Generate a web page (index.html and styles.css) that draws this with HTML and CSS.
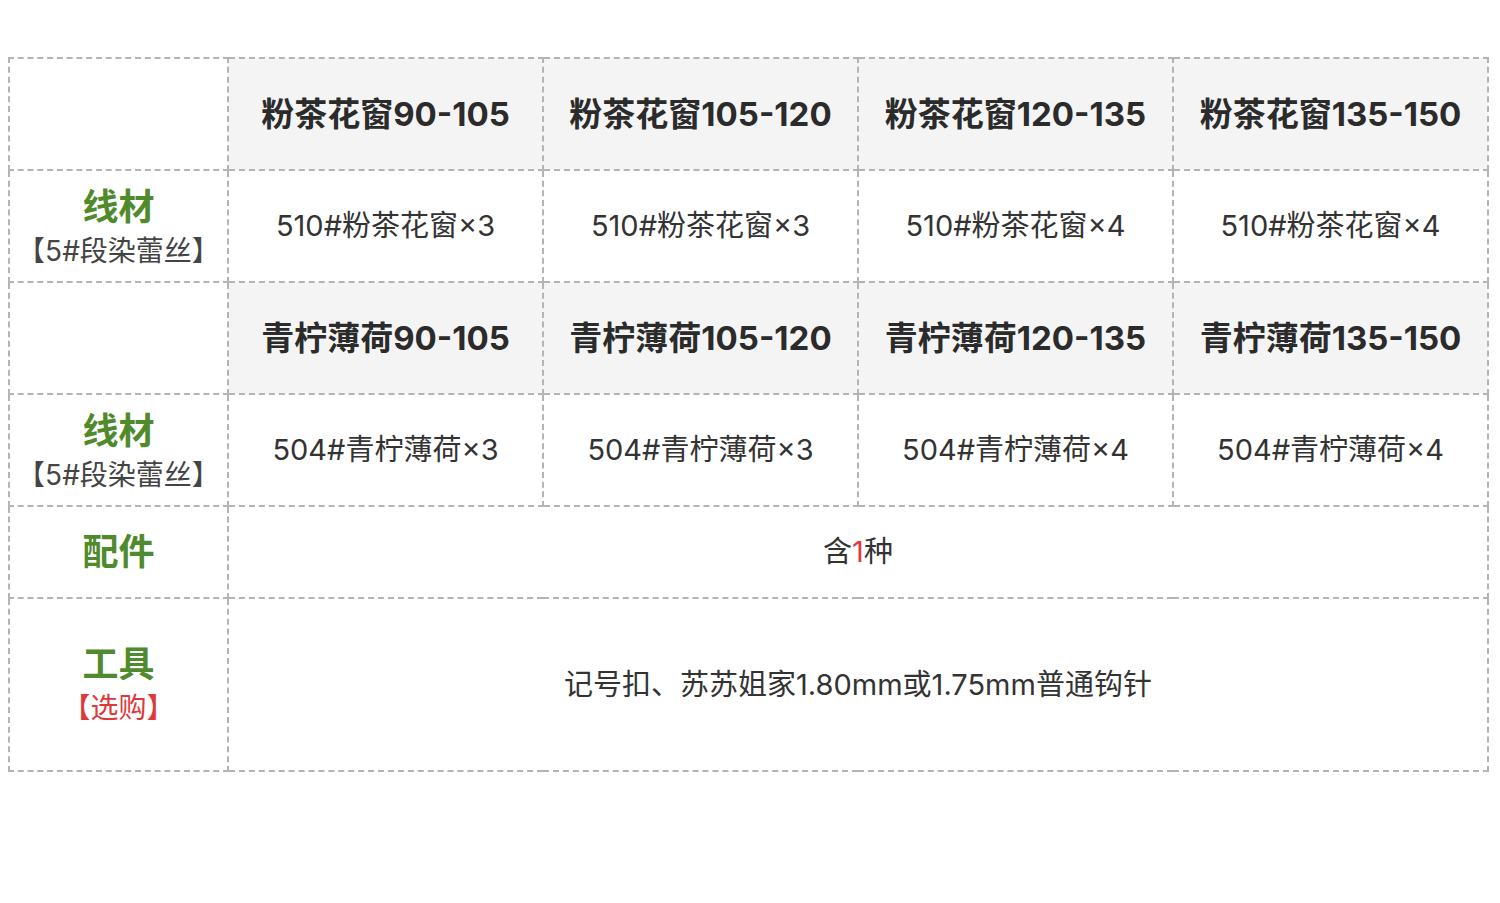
FILE: index.html
```html
<!DOCTYPE html>
<html lang="zh">
<head>
<meta charset="utf-8">
<link rel="stylesheet" href="styles.css">
</head>
<body>
<table class="spec">
  <colgroup>
    <col class="c-label">
    <col class="c-size"><col class="c-size"><col class="c-size"><col class="c-size">
  </colgroup>
  <tr class="row-head">
    <td class="blank"></td>
    <th>粉茶花窗90-105</th>
    <th>粉茶花窗105-120</th>
    <th>粉茶花窗120-135</th>
    <th>粉茶花窗135-150</th>
  </tr>
  <tr class="row-body">
    <td class="label"><div class="main">线材</div><div class="sub">【5#段染蕾丝】</div></td>
    <td>510#粉茶花窗×3</td>
    <td>510#粉茶花窗×3</td>
    <td>510#粉茶花窗×4</td>
    <td>510#粉茶花窗×4</td>
  </tr>
  <tr class="row-head">
    <td class="blank"></td>
    <th>青柠薄荷90-105</th>
    <th>青柠薄荷105-120</th>
    <th>青柠薄荷120-135</th>
    <th>青柠薄荷135-150</th>
  </tr>
  <tr class="row-body">
    <td class="label"><div class="main">线材</div><div class="sub">【5#段染蕾丝】</div></td>
    <td>504#青柠薄荷×3</td>
    <td>504#青柠薄荷×3</td>
    <td>504#青柠薄荷×4</td>
    <td>504#青柠薄荷×4</td>
  </tr>
  <tr class="row-acc">
    <td class="label"><div class="main">配件</div></td>
    <td colspan="4">含<span class="red">1</span>种</td>
  </tr>
  <tr class="row-tool">
    <td class="label"><div class="main">工具</div><div class="sub red">【选购】</div></td>
    <td colspan="4">记号扣、苏苏姐家1.80mm或1.75mm普通钩针</td>
  </tr>
</table>
</body>
</html>
```

FILE: styles.css
```css
html, body {
  margin: 0;
  padding: 0;
  background: #ffffff;
}
body {
  padding: 57px 11px 0 8px;
  font-family: Inter, "Noto Sans CJK SC", "Noto Sans", sans-serif;
  color: #333333;
}
.spec {
  width: 1481px;
  border-collapse: collapse;
  table-layout: fixed;
}
.c-label { width: 219px; }
.spec td, .spec th {
  border: 2px dashed #b4b4b4;
  text-align: center;
  vertical-align: middle;
  padding: 0;
}
.spec th {
  background: #f4f4f4;
  font-size: 33px;
  font-weight: 700;
  color: #2b2b2b;
  line-height: 40px;
}
.spec td {
  font-size: 29px;
  color: #333333;
  line-height: 36px;
}
.spec td.blank { background: #ffffff; }
.row-head, .row-body { height: 112px; }
.row-acc { height: 92px; }
.row-tool { height: 173px; }
.spec td.label { padding: 0; }
.spec .row-body td.label { padding-top: 6px; }
.spec .row-tool td.label { padding-top: 3px; }
.label .main {
  font-size: 36px;
  font-weight: 700;
  color: #4f8a2c;
  line-height: 44px;
}
.label .sub {
  font-size: 28px;
  color: #444444;
  line-height: 44px;
}
.red { color: #e0383a; }
.label .sub.red { color: #e0383a; }
```
